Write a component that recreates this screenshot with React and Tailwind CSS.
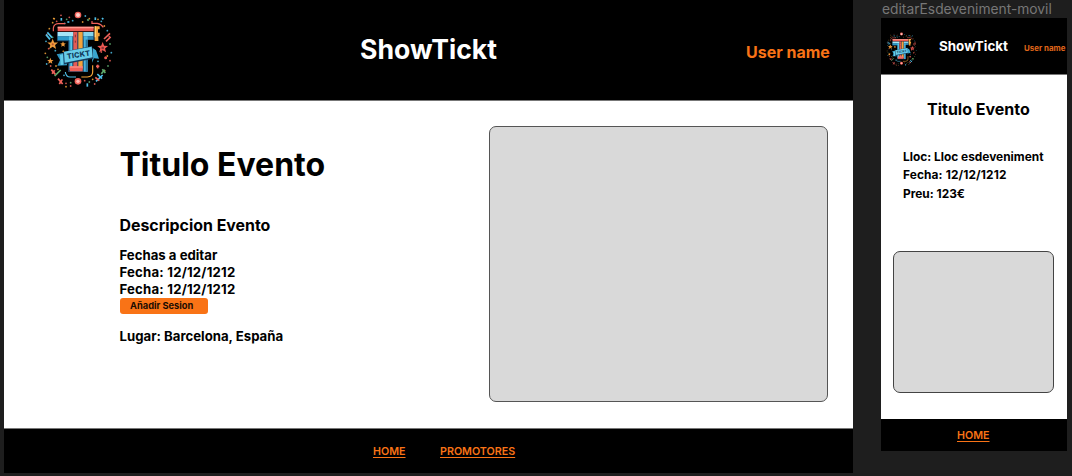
const RED = '#f0625a';
const BLUE = '#4fc0e8';
const GOLD = '#f5a43a';
const GREEN = '#5fae6e';

const dots = [
  [75, 34, RED], [62, 52, RED], [50, 56, GOLD], [92, 46, GREEN], [100, 40, RED], [110, 50, BLUE],
  [148, 36, BLUE], [160, 44, GOLD], [168, 54, RED], [186, 46, GOLD], [196, 52, BLUE], [205, 66, GOLD],
  [214, 80, BLUE], [220, 98, RED], [40, 74, GOLD], [32, 92, RED], [50, 100, GREEN], [30, 112, BLUE],
  [38, 134, RED], [28, 148, GOLD], [34, 160, GREEN], [32, 180, BLUE], [44, 186, RED], [60, 186, GOLD],
  [222, 120, GREEN], [226, 146, BLUE], [214, 156, GOLD], [222, 170, RED], [216, 186, GREEN], [206, 200, GOLD],
  [84, 214, BLUE], [90, 238, RED], [104, 236, GREEN], [90, 248, GOLD], [146, 230, RED], [170, 226, GOLD],
  [176, 240, RED], [104, 246, RED], [196, 144, RED], [58, 140, BLUE], [82, 142, GOLD], [184, 108, GOLD],
  [66, 104, RED], [140, 54, GOLD], [86, 58, BLUE], [186, 172, BLUE], [66, 196, GOLD], [160, 234, GREEN],
];

const dashes = [
  [76, 42, 76, 50, BLUE], [178, 40, 178, 48, BLUE], [52, 42, 56, 46, GOLD], [198, 42, 202, 46, BLUE],
  [154, 46, 158, 50, GREEN], [94, 54, 100, 54, BLUE], [30, 92, 42, 106, BLUE], [34, 85, 48, 101, BLUE],
  [204, 105, 222, 88, RED], [210, 112, 224, 99, RED], [154, 238, 154, 248, BLUE],
  [56, 216, 74, 198, GREEN], [46, 197, 58, 211, RED], [48, 209, 56, 199, RED],
  [66, 224, 80, 240, RED], [70, 240, 79, 226, RED], [180, 187, 190, 187, RED], [185, 182, 185, 193, RED],
  [180, 232, 200, 213, BLUE], [178, 220, 190, 230, RED], [184, 210, 198, 224, BLUE],
  [196, 209, 206, 197, GREEN], [199, 196, 208, 207, GREEN],
];

function Star({ x, y, r, fill }) {
  return (
    <path
      d="M0-10 2.7-3.3 9.5-3.1 4.2 1.3 6 8.2 0 4.4-6 8.2-4.2 1.3-9.5-3.1-2.7-3.3Z"
      transform={`translate(${x} ${y}) scale(${r / 10})`}
      fill={fill}
    />
  );
}

function Logo({ className }) {
  return (
    <svg viewBox="0 0 252 270" className={className} aria-hidden="true">
      {dots.map(([x, y, c]) => (
        <circle key={`${x}-${y}`} cx={x} cy={y} r="2.7" fill={c} opacity="0.85" />
      ))}
      <g strokeWidth="5">
        {dashes.map(([x1, y1, x2, y2, c]) => (
          <line key={`${x1}-${y1}`} x1={x1} y1={y1} x2={x2} y2={y2} stroke={c} />
        ))}
      </g>
      <g fill="none" strokeWidth="3.5">
        <path d="M52 82V72Q54 60 66 59H88" stroke={RED} />
        <path d="M166 58H184Q196 60 202 70" stroke={RED} />
        <path d="M88 204Q90 219 102 219H120" stroke={BLUE} />
        <path d="M136 219H154Q170 218 170 204V184" stroke={GOLD} />
      </g>
      <g>
        <circle cx="126" cy="33" r="10" fill="#f0625a" />
        <circle cx="126" cy="33" r="6" fill="#ffd0ca" />
        <circle cx="126" cy="232" r="10" fill="#f0625a" />
        <circle cx="126" cy="232" r="5" fill="#ffb8b2" />
      </g>
      <Star x={50} y={121} r={17} fill="#ee9a3c" />
      <Star x={81} y={121} r={9} fill="#ee9a3c" />
      <Star x={43} y={171} r={10} fill="#ee9a3c" />
      <Star x={200} y={131} r={17} fill="#ec5951" />
      <circle cx="50" cy="121" r="3" fill="#b9532e" />
      <circle cx="200" cy="132" r="4" fill="#8f3437" />
      <circle cx="209" cy="161" r="4.5" fill="#ec5951" />

      <path d="M63 84H176V108H155V204H96V112H63Z" fill="#173b5c" />
      <path d="M65 84H112V97H65Z" fill="#a5e6f7" />
      <path d="M142 84H172V97H142Z" fill="#83d3ec" />
      <path d="M65 97H109V109H65Z" fill="#2c9ac9" />
      <path d="M143 97H172V107H143Z" fill="#2c86b5" />
      <path d="M99 97H109V198H99Z" fill="#57c7ea" />
      <path d="M99 109H103V198H99Z" fill="#2f86ae" />
      <path d="M112 84H124V196H112Z" fill="#e55b54" />
      <path d="M127 84H140V196H127Z" fill="#f3a33b" />
      <path d="M143 97H155V203H143Z" fill="#48b2dc" />
      <path d="M149 107H155V203H149Z" fill="#2a7298" />
      <path d="M101 187H140V202H101Z" fill="#ee625a" />
      <path d="M101 187H140V191H101Z" fill="#ff9086" />
      <path d="M65 68H173V82H65Z" fill="#e95a54" />
      <path d="M65 68H173V73H65Z" fill="#ff9a90" />
      <path d="M176 67H191V76H186V86H191V97H187V111H176Z" fill="#f2a33b" />
      <path d="M176 67H180V100H176Z" fill="#ffd06e" />
      <path d="M118 92V100M118 110V116" stroke="#873036" strokeWidth="3" />

      <path d="M62 151 82 147 94 184 64 185 72 168Z" fill="#2f93be" />
      <path d="M72 153 82 150V182L74 183Z" fill="#62cdea" />
      <path d="M170 132 180 139 189 164 174 163 168 176Z" fill="#3aa5ce" />
      <path d="M81 144 168 126 172 164 84 181Z" fill="#173b5c" />
      <path d="M84 143 167 128 170 160 86 176Z" fill="#67cdea" />
      <text
        x="128"
        y="160"
        textAnchor="middle"
        transform="rotate(-8 127 154)"
        fill="#123a5b"
        fontFamily="Inter, sans-serif"
        fontSize="22"
        fontWeight="800"
        letterSpacing="0.5"
      >
        TICKT
      </text>
    </svg>
  );
}

function Desktop() {
  return (
    <section className="ml-1 flex h-[473px] w-[849px] shrink-0 flex-col bg-white">
      <header className="flex h-[101px] shrink-0 items-start border-b border-[#777] bg-black">
        <Logo className="mt-1 ml-8 h-[90px] w-[84px] shrink-0" />
        <h1 className="mt-[33px] ml-[240px] w-[386px] text-[26.6px] leading-8 font-bold text-white">ShowTickt</h1>
        <span className="mt-[42px] text-[16px] leading-5 font-bold text-[#f97316]">User name</span>
      </header>
      <main className="flex flex-1 items-start">
        <div className="ml-[115.5px] w-[369.5px] text-[13.2px] leading-[16.6px] font-bold">
          <h2 className="mt-[44px] text-[32px] leading-10">Titulo Evento</h2>
          <p className="mt-[31px] text-[15.9px] leading-5">Descripcion Evento</p>
          <div className="mt-[11.4px]">
            <p>Fechas a editar</p>
            <p className="tracking-[0.2px]">Fecha: 12/12/1212</p>
            <p className="tracking-[0.2px]">Fecha: 12/12/1212</p>
          </div>
          <button className="mt-[0.6px] flex h-4 w-[88px] items-center rounded-[3px] bg-[#f97316] pl-[10.5px] text-[9.3px] leading-none text-[#1c0d02]">
            Añadir Sesion
          </button>
          <p className="mt-[14px]">Lugar: Barcelona, España</p>
        </div>
        <div className="mt-[25px] h-[276px] w-[339px] rounded-[7px] border border-[#555] bg-[#d9d9d9]" />
      </main>
      <footer className="flex h-[45px] shrink-0 gap-[34.5px] border-t border-[#777] bg-black pt-[15px] pl-[369px] text-[10.7px] leading-4 font-semibold text-[#f97316]">
        <a className="underline underline-offset-2">HOME</a>
        <a className="underline underline-offset-2">PROMOTORES</a>
      </footer>
    </section>
  );
}

function Mobile() {
  return (
    <section className="ml-7 flex w-[186px] shrink-0 flex-col">
      <p className="h-[18px] pl-px text-[13.8px] leading-[18px] whitespace-nowrap text-[#777]">editarEsdeveniment-movil</p>
      <header className="flex h-[57px] items-start border-b border-[#777] bg-black">
        <Logo className="mt-[11px] ml-[2px] h-[40px] w-[37px] shrink-0" />
        <h1 className="mt-[18px] ml-[19px] w-[85px] shrink-0 text-[13.4px] leading-5 font-bold text-white">ShowTickt</h1>
        <span className="mt-[22px] text-[7.9px] leading-4 font-bold whitespace-nowrap text-[#e0671a]">User name</span>
      </header>
      <main className="flex h-[344px] flex-col bg-white font-bold">
        <h2 className="mt-[24px] ml-[46px] text-[16px] leading-5">Titulo Evento</h2>
        <div className="mt-[28.6px] ml-[22px] text-[11.9px] leading-[18.6px] whitespace-nowrap">
          <p>Lloc: Lloc esdeveniment</p>
          <p className="tracking-[0.12px]">Fecha: 12/12/1212</p>
          <p>Preu: 123€</p>
        </div>
        <div className="mt-[47.4px] ml-3 h-[142px] w-[161px] rounded-[7px] border border-[#444] bg-[#d9d9d9]" />
      </main>
      <footer className="flex h-[32px] bg-black pt-[9px] pl-[76px] text-[10.7px] leading-4 font-semibold text-[#f97316]">
        <a className="underline underline-offset-2">HOME</a>
      </footer>
    </section>
  );
}

export default function App() {
  return (
    <div className="flex h-[476px] w-[1072px] items-start overflow-hidden bg-[#1e1e1e] font-['Inter',sans-serif] text-black">
      <Desktop />
      <Mobile />
    </div>
  );
}
